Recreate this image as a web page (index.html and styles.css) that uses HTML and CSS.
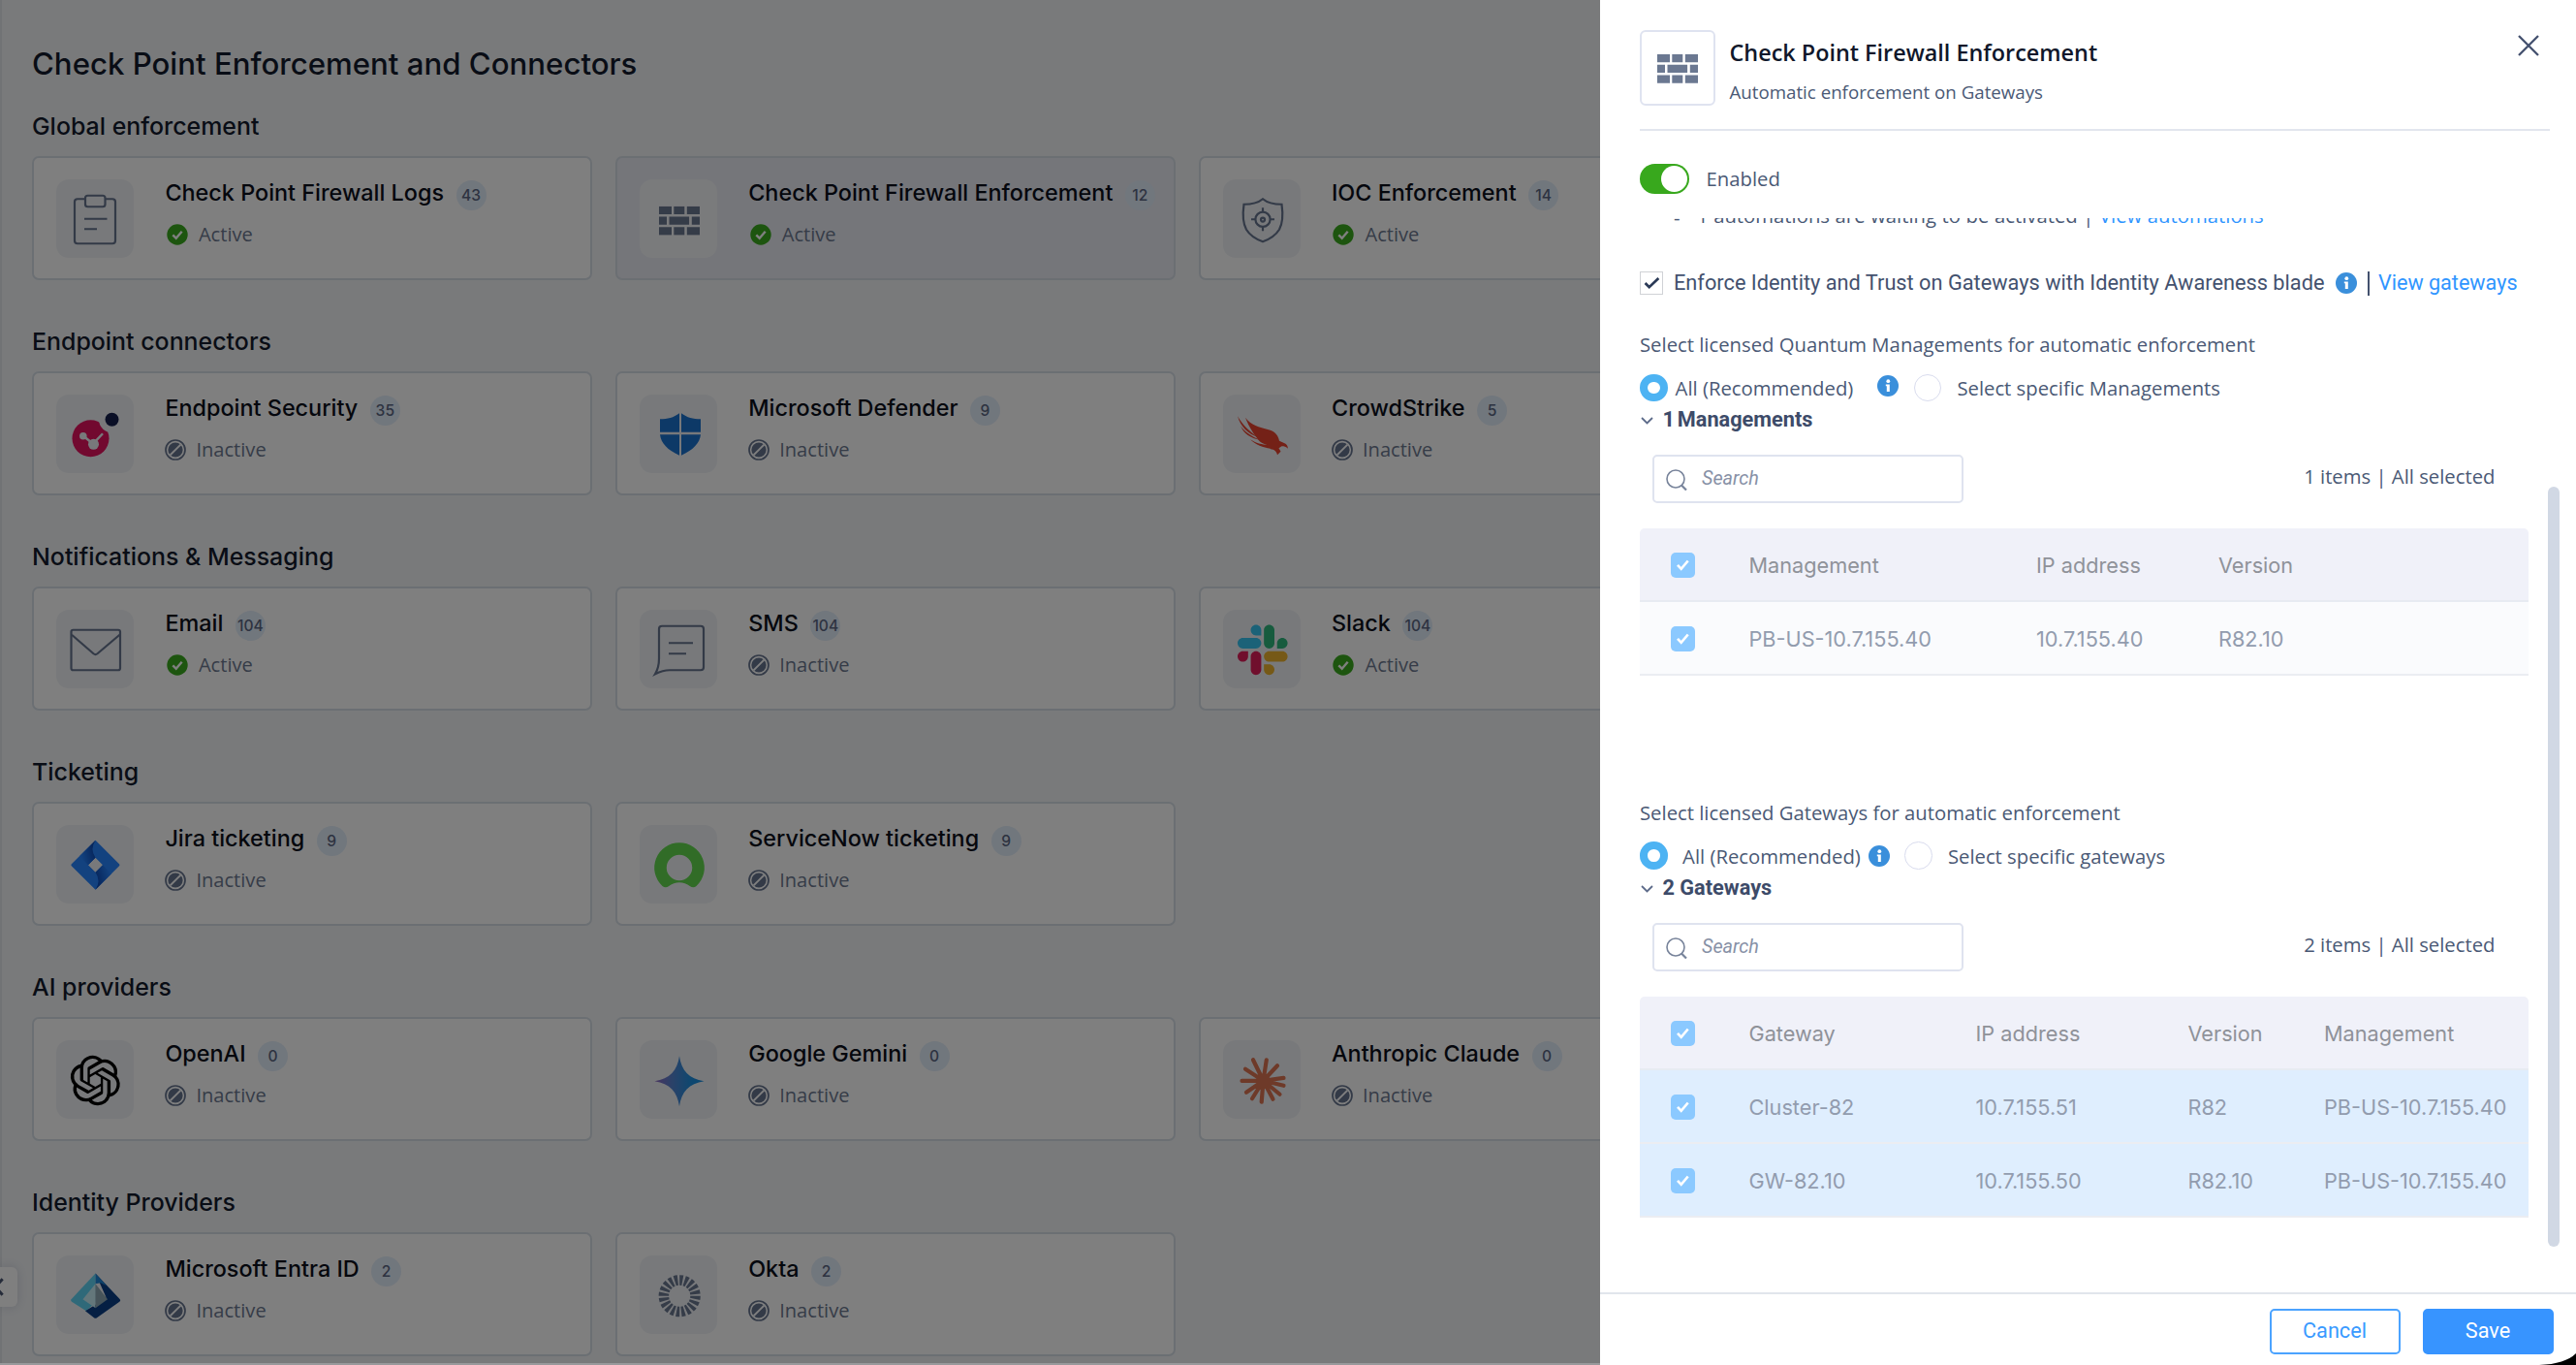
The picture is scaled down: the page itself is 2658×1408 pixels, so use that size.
FILE: index.html
```html
<!DOCTYPE html>
<html lang="en">
<head>
    <meta charset="UTF-8">
    <meta name="viewport" content="width=device-width, initial-scale=1.0">
    <title>Check Point Enforcement and Connectors</title>
    <link rel="stylesheet" href="styles.css">
</head>
<body>
    <!-- Shared icons -->
    <svg class="sprite" xmlns="http://www.w3.org/2000/svg">
        <symbol id="i-active" viewBox="0 0 22 22">
            <circle cx="11" cy="11" r="10.7" fill="#3bab1f"/>
            <path d="M6.3 11.3l3.4 3.4 6-7" fill="none" stroke="#fff" stroke-width="2.4"/>
        </symbol>
        <symbol id="i-inactive" viewBox="0 0 22 22">
            <circle cx="11" cy="11" r="10" fill="none" stroke="#66748f" stroke-width="1.7"/>
            <circle cx="11" cy="11" r="7.6" fill="#66748f"/>
            <path d="M5.6 16.4L16.4 5.6" stroke="#fff" stroke-width="2"/>
        </symbol>
        <symbol id="i-info" viewBox="0 0 22 22">
            <circle cx="11" cy="11" r="11" fill="#3a8fdb"/>
            <circle cx="11.3" cy="6.2" r="1.9" fill="#fff"/>
            <path d="M8.8 9.5h4v7.4h-3v-5.6h-1z" fill="#fff"/>
        </symbol>
        <symbol id="i-bricks" viewBox="0 0 42 30">
            <path d="M0 0h13v8.2H0zM15.3 0h11v8.2h-11zM28.8 0H42v8.2H28.8zM0 10.8h8V19H0zM10.5 10.8h20.6V19H10.5zM33.8 10.8H42V19h-8.2zM0 21.6h13v8.2H0zM15.3 21.6h11v8.2h-11zM28.8 21.6H42v8.2H28.8z" fill="#6b7891"/>
        </symbol>
        <symbol id="i-chevron" viewBox="0 0 13 8">
            <path d="M1 1l5.5 5.5L12 1" fill="none" stroke="#5d6b8a" stroke-width="1.8"/>
        </symbol>
        <symbol id="i-search" viewBox="0 0 22 22">
            <circle cx="10" cy="10" r="9" fill="none" stroke="#77839a" stroke-width="1.6"/>
            <path d="M16 16.500l5 5" stroke="#77839a" stroke-width="2.2"/>
        </symbol>
        <symbol id="i-check" viewBox="0 0 25 25">
            <path d="M7 12.800l3.700 4 7-8.300" fill="none" stroke="#fff" stroke-width="2.7"/>
        </symbol>
    </svg>

    <main class="page">
        <h1>Check Point Enforcement and Connectors</h1>

        <section class="group">
            <h2>Global enforcement</h2>
            <div class="cards">
                <article class="card">
                    <svg class="logo line" viewBox="0 0 80 80">
                        <path d="M30 20h-8a3 3 0 0 0-3 3v40a3 3 0 0 0 3 3h36a3 3 0 0 0 3-3V23a3 3 0 0 0-3-3h-8"/>
                        <rect x="30" y="16.5" width="20.5" height="11.5" rx="2.5"/>
                        <path d="M29 40.500h23.500M29 51h13"/>
                    </svg>
                    <div class="info">
                        <div class="name">Check Point Firewall Logs <span class="count">43</span></div>
                        <div class="status active"><svg><use href="#i-active"/></svg>Active</div>
                    </div>
                </article>
                <article class="card selected">
                    <svg class="logo" viewBox="0 0 80 80"><use href="#i-bricks" x="20" y="27.5" width="42" height="30"/></svg>
                    <div class="info">
                        <div class="name">Check Point Firewall Enforcement <span class="count">12</span></div>
                        <div class="status active"><svg><use href="#i-active"/></svg>Active</div>
                    </div>
                </article>
                <article class="card">
                    <svg class="logo line" viewBox="0 0 80 80">
                        <path d="M41 20c5 4.200 12 5.500 19.500 5.500C62 36 61.500 45 58 51.500 54 58 48 61.500 41 64 34 61.500 28 58 24 51.500 20.500 45 20 36 21.500 25.500 29 25.500 36 24.200 41 20z"/>
                        <circle cx="41" cy="41" r="7.6"/>
                        <path d="M41 29v5M41 48v5M29 41h5M48 41h5"/>
                        <circle cx="41" cy="41.3" r="2"/>
                    </svg>
                    <div class="info">
                        <div class="name">IOC Enforcement <span class="count">14</span></div>
                        <div class="status active"><svg><use href="#i-active"/></svg>Active</div>
                    </div>
                </article>
            </div>
        </section>

        <section class="group">
            <h2>Endpoint connectors</h2>
            <div class="cards">
                <article class="card">
                    <svg class="logo" viewBox="0 0 80 80">
                        <circle cx="35.5" cy="45" r="19" fill="#e4125f"/>
                        <circle cx="57.5" cy="25.5" r="13.5" fill="#f0f3f7"/>
                        <circle cx="57.5" cy="25.5" r="7" fill="#151f4c"/>
                        <path d="M28 42.500l10 8 10-10.500" fill="none" stroke="#f0f3f7" stroke-width="2.5"/>
                        <circle cx="27.8" cy="42.5" r="3.8" fill="#f0f3f7"/>
                        <circle cx="38.5" cy="51" r="5.5" fill="#f0f3f7"/>
                    </svg>
                    <div class="info">
                        <div class="name">Endpoint Security <span class="count">35</span></div>
                        <div class="status"><svg><use href="#i-inactive"/></svg>Inactive</div>
                    </div>
                </article>
                <article class="card">
                    <svg class="logo" viewBox="0 0 80 80">
                        <path d="M41 19v19.500H21V25c8 0 14-1.500 20-6zM43 19c6 4.500 12 6 20 6v13.500H43zM21 41h20v21.500C29 57 22 50 21 41zM43 41h20c-1 9-8 16-20 21.500z" fill="#1b72cf"/>
                    </svg>
                    <div class="info">
                        <div class="name">Microsoft Defender <span class="count">9</span></div>
                        <div class="status"><svg><use href="#i-inactive"/></svg>Inactive</div>
                    </div>
                </article>
                <article class="card">
                    <svg class="logo" viewBox="0 0 80 80">
                        <g fill="#e8432f">
                            <path d="M23 23.500c6 8 14 10 24 12.500 7 2 10 6 11 11.500l5.500 2.500c3 1.500 3 3 3.500 5.500-2-2-4-2.500-6.500-2.500l-3 2 2 3.500-3.500 3.500c-1-4-3-5.500-7-6l-3-4c-5-1.500-8-3-10-6C33 42 27 34 23 23.500z"/>
                            <path d="M15 22c5 9 12 15.500 21 22C26 40 18 33 15 22z"/>
                            <path d="M18 32c4 6 11 10.500 20 14.500C29 45 21 40 18 32z"/>
                            <path d="M28 46c6 4 12 5 19 6l2 3.500C41 54 34 52 28 46z"/>
                        </g>
                    </svg>
                    <div class="info">
                        <div class="name">CrowdStrike <span class="count">5</span></div>
                        <div class="status"><svg><use href="#i-inactive"/></svg>Inactive</div>
                    </div>
                </article>
            </div>
        </section>

        <section class="group">
            <h2>Notifications &amp; Messaging</h2>
            <div class="cards">
                <article class="card">
                    <svg class="logo line" viewBox="0 0 80 80">
                        <rect x="15.5" y="20.5" width="50.5" height="41.5" rx="2"/>
                        <path d="M16 25.500l22.500 19.500q2 1.700 4 0L65.500 25.500"/>
                    </svg>
                    <div class="info">
                        <div class="name">Email <span class="count">104</span></div>
                        <div class="status active"><svg><use href="#i-active"/></svg>Active</div>
                    </div>
                </article>
                <article class="card">
                    <svg class="logo line" viewBox="0 0 80 80">
                        <path d="M23 16.500h40a3 3 0 0 1 3 3V59a3 3 0 0 1-3 3H31c-6 0-11 2-15 4 3-5 4-10 4-16V19.500a3 3 0 0 1 3-3z"/>
                        <path d="M30 34h25M30 45h18"/>
                    </svg>
                    <div class="info">
                        <div class="name">SMS <span class="count">104</span></div>
                        <div class="status"><svg><use href="#i-inactive"/></svg>Inactive</div>
                    </div>
                </article>
                <article class="card">
                    <svg class="logo" viewBox="0 0 80 80">
                        <g transform="translate(15 15.3) scale(.42)">
                            <path d="M25.800 77.600c0 7.100-5.800 12.900-12.900 12.900S0 84.700 0 77.600s5.800-12.900 12.900-12.900h12.900v12.900zm6.500 0c0-7.100 5.800-12.900 12.900-12.900s12.900 5.800 12.900 12.900v32.300c0 7.100-5.800 12.900-12.900 12.900s-12.900-5.800-12.900-12.900V77.600z" fill="#e01e5a"/>
                            <path d="M45.200 25.800c-7.100 0-12.900-5.800-12.900-12.900S38.100 0 45.200 0s12.900 5.800 12.900 12.900v12.900H45.200zm0 6.500c7.100 0 12.900 5.800 12.900 12.900s-5.800 12.900-12.900 12.900H12.900C5.800 58.100 0 52.300 0 45.200s5.800-12.900 12.900-12.900h32.300z" fill="#36c5f0"/>
                            <path d="M97 45.200c0-7.100 5.800-12.900 12.900-12.900s12.900 5.800 12.900 12.900-5.800 12.900-12.900 12.900H97V45.200zm-6.500 0c0 7.100-5.800 12.900-12.900 12.900s-12.900-5.800-12.900-12.900V12.900C64.700 5.800 70.500 0 77.600 0s12.900 5.800 12.900 12.900v32.300z" fill="#2eb67d"/>
                            <path d="M77.600 97c7.100 0 12.900 5.800 12.900 12.900s-5.800 12.900-12.900 12.900-12.900-5.800-12.900-12.900V97h12.900zm0-6.500c-7.100 0-12.900-5.800-12.900-12.900s5.800-12.900 12.900-12.900h32.300c7.100 0 12.900 5.800 12.900 12.900s-5.800 12.900-12.900 12.900H77.600z" fill="#ecb22e"/>
                        </g>
                    </svg>
                    <div class="info">
                        <div class="name">Slack <span class="count">104</span></div>
                        <div class="status active"><svg><use href="#i-active"/></svg>Active</div>
                    </div>
                </article>
            </div>
        </section>

        <section class="group">
            <h2>Ticketing</h2>
            <div class="cards">
                <article class="card">
                    <svg class="logo" viewBox="0 0 80 80">
                        <defs>
                            <linearGradient id="jira1" x1="1" y1="0.3" x2="0.1" y2="0.7"><stop offset="0" stop-color="#0b45ae"/><stop offset="1" stop-color="#2684ff"/></linearGradient>
                            <linearGradient id="jira2" x1="0" y1="0.7" x2="0.9" y2="0.3"><stop offset="0" stop-color="#0b45ae"/><stop offset="1" stop-color="#2684ff"/></linearGradient>
                        </defs>
                        <path d="M40.500 15.500L65 40q1 1 0 2L40.500 66.500 15.800 42q-1-1 0-2zM40.500 33.500L33 41l7.500 7.500L48 41z" fill="#2684ff" fill-rule="evenodd"/>
                        <path d="M40.500 15.500q-6 9 0 18L33 41l-9-9z" fill="url(#jira1)"/>
                        <path d="M40.500 66.500q6-9 0-18L48 41l9 9z" fill="url(#jira2)"/>
                    </svg>
                    <div class="info">
                        <div class="name">Jira ticketing <span class="count">9</span></div>
                        <div class="status"><svg><use href="#i-inactive"/></svg>Inactive</div>
                    </div>
                </article>
                <article class="card">
                    <svg class="logo" viewBox="0 0 80 80">
                        <path d="M41 18a25.800 25.800 0 0 0-17.500 44.800c2 1.700 4.500 1.600 6.300.2 7-5.200 15.400-5.200 22.400 0 1.800 1.400 4.400 1.500 6.300-.2A25.800 25.800 0 0 0 41 18zm0 12.500a13 13 0 1 1 0 26.500 13 13 0 1 1 0-26.500z" fill="#62d84e" fill-rule="evenodd"/>
                    </svg>
                    <div class="info">
                        <div class="name">ServiceNow ticketing <span class="count">9</span></div>
                        <div class="status"><svg><use href="#i-inactive"/></svg>Inactive</div>
                    </div>
                </article>
            </div>
        </section>

        <section class="group">
            <h2>AI providers</h2>
            <div class="cards">
                <article class="card">
                    <svg class="logo" viewBox="0 0 80 80">
                        <path transform="translate(14.5 15.5) scale(2.15)" d="M22.2819 9.8211a5.9847 5.9847 0 0 0-.5157-4.9108 6.0462 6.0462 0 0 0-6.5098-2.9A6.0651 6.0651 0 0 0 4.9807 4.1818a5.9847 5.9847 0 0 0-3.9977 2.9 6.0462 6.0462 0 0 0 .7427 7.0966 5.98 5.98 0 0 0 .511 4.9107 6.051 6.051 0 0 0 6.5146 2.9001A5.9847 5.9847 0 0 0 13.2599 24a6.0557 6.0557 0 0 0 5.7718-4.2058 5.9894 5.9894 0 0 0 3.9977-2.9001 6.0557 6.0557 0 0 0-.7475-7.0729zm-9.022 12.6081a4.4755 4.4755 0 0 1-2.8764-1.0408l.1419-.0804 4.7783-2.7582a.7948.7948 0 0 0 .3927-.6813v-6.7369l2.02 1.1686a.071.071 0 0 1 .038.052v5.5826a4.504 4.504 0 0 1-4.4945 4.4944zm-9.6607-4.1254a4.4708 4.4708 0 0 1-.5346-3.0137l.142.0852 4.783 2.7582a.7712.7712 0 0 0 .7806 0l5.8428-3.3685v2.3324a.0804.0804 0 0 1-.0332.0615L9.74 19.9502a4.4992 4.4992 0 0 1-6.1408-1.6464zM2.3408 7.8956a4.485 4.485 0 0 1 2.3655-1.9728V11.6a.7664.7664 0 0 0 .3879.6765l5.8144 3.3543-2.0201 1.1685a.0757.0757 0 0 1-.071 0l-4.8303-2.7865A4.504 4.504 0 0 1 2.3408 7.872zm16.5963 3.8558L13.1038 8.364 15.1192 7.2a.0757.0757 0 0 1 .071 0l4.8303 2.7913a4.4944 4.4944 0 0 1-.6765 8.1042v-5.6772a.79.79 0 0 0-.407-.667zm2.0107-3.0231l-.142-.0852-4.7735-2.7818a.7759.7759 0 0 0-.7854 0L9.409 9.2297V6.8974a.0662.0662 0 0 1 .0284-.0615l4.8303-2.7866a4.4992 4.4992 0 0 1 6.6802 4.66zM8.3065 12.863l-2.02-1.1638a.0804.0804 0 0 1-.038-.0567V6.0742a4.4992 4.4992 0 0 1 7.3757-3.4537l-.142.0805L8.704 5.459a.7948.7948 0 0 0-.3927.6813zm1.0976-2.3654l2.602-1.4998 2.6069 1.4998v2.9994l-2.5974 1.4997-2.6067-1.4997Z"/>
                    </svg>
                    <div class="info">
                        <div class="name">OpenAI <span class="count">0</span></div>
                        <div class="status"><svg><use href="#i-inactive"/></svg>Inactive</div>
                    </div>
                </article>
                <article class="card">
                    <svg class="logo" viewBox="0 0 80 80">
                        <defs>
                            <linearGradient id="gemini"><stop offset="0" stop-color="#9168c0"/><stop offset=".35" stop-color="#5684d1"/><stop offset=".75" stop-color="#1b8fe0"/></linearGradient>
                        </defs>
                        <path d="M41 16c2 15 10 23.500 25.500 26C51 44.500 43 53 41 68c-2-15-10-23.500-25.500-26C31 39.500 39 31 41 16z" fill="url(#gemini)"/>
                    </svg>
                    <div class="info">
                        <div class="name">Google Gemini <span class="count">0</span></div>
                        <div class="status"><svg><use href="#i-inactive"/></svg>Inactive</div>
                    </div>
                </article>
                <article class="card">
                    <svg class="logo" viewBox="0 0 80 80">
                        <path d="M41.500 41.500L31 20M41.500 41.500L44.800 20M41.500 41.500L56 26M41.500 41.500L62.500 38.700M41.500 41.500L62.500 46.500M41.500 41.500L58.500 55.500M41.500 41.500L51.500 60.500M41.500 41.500L39.700 63.500M41.500 41.500L30 60M41.500 41.500L24 53.500M41.500 41.500L19.500 41.700M41.500 41.500L23 29.500" stroke="#dc7552" stroke-width="4.2" stroke-linecap="round"/>
                        <circle cx="41.5" cy="41.5" r="7" fill="#dc7552"/>
                    </svg>
                    <div class="info">
                        <div class="name">Anthropic Claude <span class="count">0</span></div>
                        <div class="status"><svg><use href="#i-inactive"/></svg>Inactive</div>
                    </div>
                </article>
            </div>
        </section>

        <section class="group">
            <h2>Identity Providers</h2>
            <div class="cards">
                <article class="card">
                    <svg class="logo" viewBox="0 0 80 80">
                        <path d="M40.500 18.300L15.500 45q-1 1.500.5 2.500l15 9.500 9.500-9z" fill="#5fd3f3"/>
                        <path d="M40.500 18.300L65.800 45q1 1.500-.5 2.500L42 64q-1.500 1-3 0l-9-7 10.500-6.500 11-7.500z" fill="#0a3f86"/>
                        <path d="M40.500 18.300L52 31l-6-3-5.500 1z" fill="#1f86d6"/>
                        <path d="M40.500 29L27.500 45l13 9z" fill="#c9eef6"/>
                        <path d="M40.500 29L53 45l-12.500 9z" fill="#8fa9b4"/>
                    </svg>
                    <div class="info">
                        <div class="name">Microsoft Entra ID <span class="count">2</span></div>
                        <div class="status"><svg><use href="#i-inactive"/></svg>Inactive</div>
                    </div>
                </article>
                <article class="card">
                    <svg class="logo" viewBox="0 0 80 80">
                        <circle cx="41.2" cy="41.5" r="16.3" fill="none" stroke="#6b7891" stroke-width="10.5" pathLength="60" stroke-dasharray="1.9 1.1"/>
                    </svg>
                    <div class="info">
                        <div class="name">Okta <span class="count">2</span></div>
                        <div class="status"><svg><use href="#i-inactive"/></svg>Inactive</div>
                    </div>
                </article>
            </div>
        </section>

        <button class="collapse" type="button">
            <svg viewBox="0 0 17 42"><path d="M2.500 12.500L-5 21l7.500 8.500" fill="none" stroke="#4a5672" stroke-width="3"/></svg>
        </button>
    </main>

    <div class="overlay"></div>

    <aside class="panel">
        <header class="panel-header">
            <div class="panel-icon"><svg><use href="#i-bricks"/></svg></div>
            <div class="panel-heading">
                <h3>Check Point Firewall Enforcement</h3>
                <p>Automatic enforcement on Gateways</p>
            </div>
            <svg class="close" viewBox="0 0 22 22"><path d="M1 1l20 20M21 1L1 21" stroke="#43506e" stroke-width="2.3"/></svg>
        </header>

        <div class="enable-row">
            <span class="toggle"></span>
            <span>Enabled</span>
        </div>

        <div class="panel-body">
            <p class="pending"><span class="dash">-</span>1 automations are waiting to be activated | <a>View automations</a></p>

            <div class="enforce">
                <span class="checkbox"><svg viewBox="0 0 24 24"><path d="M5 12l4.500 4.500L20 6.500" fill="none" stroke="#2b3a57" stroke-width="3"/></svg></span>
                <span class="enforce-label">Enforce Identity and Trust on Gateways with Identity Awareness blade</span>
                <svg class="info-icon"><use href="#i-info"/></svg>
                <span class="bar"></span>
                <a>View gateways</a>
            </div>

            <section class="picker managements">
                <p class="picker-title">Select licensed Quantum Managements for automatic enforcement</p>
                <div class="radios">
                    <span class="radio on"></span>
                    <span class="all-label">All (Recommended)</span>
                    <svg class="info-icon"><use href="#i-info"/></svg>
                    <span class="radio"></span>
                    <span class="specific-label">Select specific Managements</span>
                </div>
                <div class="expander"><svg><use href="#i-chevron"/></svg>1 Managements</div>
                <div class="toolbar">
                    <div class="search"><svg><use href="#i-search"/></svg>Search</div>
                    <span class="summary">1 items | All selected</span>
                </div>
                <div class="table">
                    <div class="row head">
                        <span class="check"><svg><use href="#i-check"/></svg></span>
                        <span>Management</span><span>IP address</span><span>Version</span>
                    </div>
                    <div class="row">
                        <span class="check"><svg><use href="#i-check"/></svg></span>
                        <span>PB-US-10.7.155.40</span><span>10.7.155.40</span><span>R82.10</span>
                    </div>
                </div>
            </section>

            <section class="picker gateways">
                <p class="picker-title">Select licensed Gateways for automatic enforcement</p>
                <div class="radios">
                    <span class="radio on"></span>
                    <span class="all-label">All (Recommended)</span>
                    <svg class="info-icon"><use href="#i-info"/></svg>
                    <span class="radio"></span>
                    <span class="specific-label">Select specific gateways</span>
                </div>
                <div class="expander"><svg><use href="#i-chevron"/></svg>2 Gateways</div>
                <div class="toolbar">
                    <div class="search"><svg><use href="#i-search"/></svg>Search</div>
                    <span class="summary">2 items | All selected</span>
                </div>
                <div class="table">
                    <div class="row head">
                        <span class="check"><svg><use href="#i-check"/></svg></span>
                        <span>Gateway</span><span>IP address</span><span>Version</span><span>Management</span>
                    </div>
                    <div class="row">
                        <span class="check"><svg><use href="#i-check"/></svg></span>
                        <span>Cluster-82</span><span>10.7.155.51</span><span>R82</span><span>PB-US-10.7.155.40</span>
                    </div>
                    <div class="row">
                        <span class="check"><svg><use href="#i-check"/></svg></span>
                        <span>GW-82.10</span><span>10.7.155.50</span><span>R82.10</span><span>PB-US-10.7.155.40</span>
                    </div>
                </div>
            </section>

            <div class="scrollbar"></div>
        </div>

        <footer class="panel-footer">
            <button class="btn" type="button">Cancel</button>
            <button class="btn primary" type="button">Save</button>
        </footer>
        <svg class="corner" viewBox="0 0 38 12"><path d="M38 0v12H0Q27 11 38 0z"/></svg>
    </aside>
</body>
</html>
```
FILE: styles.css
```css
* {
    box-sizing: border-box;
}

body {
    margin: 0;
    height: 1408px;
    position: relative;
    overflow: hidden;
    font-family: Inter, sans-serif;
    background: #f3f5f7;
}

h1, h2, h3, p {
    margin: 0;
}

.sprite {
    position: absolute;
    width: 0;
    height: 0;
}

/* Connectors page */
.page {
    height: 1408px;
    padding: 47px 0 0 31px;
    border-left: 2px solid #e3e6ea;
    overflow: hidden;
}

.page h1 {
    margin-bottom: 29.8px;
    font-size: 31.2px;
    line-height: 38px;
    font-weight: 500;
    color: #131a2d;
}

.group {
    height: 222px;
}

.group h2 {
    margin-bottom: 16.4px;
    font-size: 24.91px;
    line-height: 30px;
    font-weight: 500;
    color: #131a2d;
}

.cards {
    display: grid;
    grid-template-columns: repeat(3, 578px);
    gap: 23.8px;
}

.card {
    display: flex;
    gap: 32px;
    height: 127.7px;
    padding: 22.2px 23.4px;
    background: #fff;
    border: 2px solid #d7dee6;
    border-radius: 7px;
}

.card.selected {
    background: #eaecf5;
}

.logo {
    flex: none;
    width: 80px;
    height: 80.5px;
    border-radius: 13px;
    background: #f0f3f7;
}

.selected .logo {
    background: #f5f6f9;
}

.logo.line {
    fill: none;
    stroke: #66748f;
    stroke-width: 2.2;
}

.name {
    display: flex;
    gap: 12.5px;
    height: 28px;
    font-size: 23.4px;
    line-height: 28px;
    font-weight: 500;
    color: #0b0f1b;
    white-space: nowrap;
}

.count {
    width: 31px;
    height: 31px;
    margin-top: 1px;
    border-radius: 50%;
    background: #e3eefa;
    color: #5b6682;
    font-size: 15.6px;
    line-height: 31px;
    display: flex;
    justify-content: center;
}

.status {
    display: flex;
    align-items: center;
    gap: 10px;
    margin-top: 15px;
    font-family: "Open Sans", sans-serif;
    font-size: 20.1px;
    line-height: 28px;
    color: #6d7990;
}

.status svg {
    width: 22px;
    height: 22px;
}

.status.active {
    gap: 11px;
    padding-left: 1.5px;
}

.collapse {
    position: absolute;
    left: 0;
    top: 1307px;
    width: 18px;
    height: 41px;
    padding: 0;
    background: #fff;
    border: 0;
    border-radius: 0 6px 6px 0;
    box-shadow: 0 0 12px rgba(60, 70, 120, 0.2);
}

.collapse svg {
    display: block;
    width: 17px;
    height: 41px;
}

.overlay {
    position: absolute;
    inset: 0;
    background: rgba(0, 0, 0, 0.5);
    border-bottom: 2px solid #98999b;
}

/* Side panel */
.panel {
    position: absolute;
    top: 0;
    right: 0;
    width: 1007.5px;
    height: 1408px;
    display: flex;
    flex-direction: column;
    background: #fff;
    color: #4a5975;
    font-family: "Open Sans", sans-serif;
    font-size: 20.3px;
    line-height: 28px;
}

.panel a {
    color: #2f95ff;
}

.panel-header {
    display: flex;
    align-items: flex-start;
    height: 134.5px;
    margin: 0 27px 0 41.5px;
    padding-top: 31.3px;
    border-bottom: 2px solid #e2e6ee;
}

.panel-icon {
    width: 78px;
    height: 78px;
    margin-right: 14.5px;
    display: flex;
    align-items: center;
    justify-content: center;
    border: 2px solid #dfe3f0;
    border-radius: 6px;
}

.panel-icon svg {
    width: 42px;
    height: 30px;
    margin-top: 2px;
}

.panel-heading h3 {
    margin-top: 6.5px;
    font-size: 23.4px;
    line-height: 32px;
    font-weight: 600;
    color: #10172a;
}

.panel-heading p {
    margin-top: 12px;
    font-size: 18.72px;
    line-height: 26px;
}

.close {
    width: 22px;
    height: 22px;
    margin: 4.7px 11px 0 auto;
}

.enable-row {
    display: flex;
    align-items: center;
    gap: 18px;
    height: 90.5px;
    margin-left: 41.5px;
    padding: 14px 0 5px;
}

.toggle {
    width: 50.5px;
    height: 31px;
    padding: 2px;
    border-radius: 16px;
    background: #38a81d;
}

.toggle::after {
    content: "";
    display: block;
    width: 27px;
    height: 27px;
    margin-left: auto;
    border-radius: 50%;
    background: #fff;
}

.panel-body {
    position: relative;
    height: 1107.5px;
    padding: 0 49px 0 41.5px;
    overflow: hidden;
}

.pending {
    margin-top: -17.2px;
    padding-left: 35px;
    white-space: nowrap;
    word-spacing: 0.3px;
}

.dash {
    display: inline-block;
    width: 24px;
    transform: translateY(1.5px);
}

.enforce {
    display: flex;
    align-items: center;
    height: 28px;
    margin-top: 42.6px;
    font-family: Roboto, sans-serif;
    font-size: 21.75px;
    white-space: nowrap;
    color: #43516e;
}

.enforce a {
    font-size: 21.6px;
}

.checkbox {
    width: 24px;
    height: 24px;
    border: 1.5px solid #d0d2d6;
}

.checkbox svg {
    display: block;
}

.enforce-label {
    margin: 0 12px 0 11px;
}

.info-icon {
    flex: none;
    width: 22px;
    height: 22px;
}

.bar {
    width: 1.5px;
    height: 25px;
    margin: 0 9px 0 11px;
    background: #43516e;
}

.managements {
    margin-top: 34.3px;
}

.gateways {
    margin-top: 126.3px;
}

.radios {
    display: flex;
    align-items: center;
    height: 28.6px;
    margin-top: 16.8px;
    white-space: nowrap;
}

.radio {
    width: 28.6px;
    height: 28.6px;
    border: 1.5px solid #d9dcee;
    border-radius: 50%;
}

.radio.on {
    border: 8px solid #4db3f3;
}

.managements .all-label {
    margin: 0 25px 0 8px;
}

.managements .info-icon {
    margin: 0 15.5px 3px 0;
}

.gateways .all-label {
    margin: 0 8px 0 15.5px;
}

.gateways .info-icon {
    margin-right: 15.5px;
}

.specific-label {
    margin-left: 16px;
}

.expander {
    display: flex;
    align-items: center;
    gap: 9.5px;
    margin-top: 5.3px;
    padding-left: 1px;
    font-family: Roboto, sans-serif;
    font-size: 21.7px;
    font-weight: 700;
    color: #3d4b69;
}

.managements .expander {
    word-spacing: -2.5px;
}

.expander svg {
    width: 13px;
    height: 8px;
    margin-top: 2px;
}

.toolbar {
    display: flex;
    justify-content: space-between;
    align-items: center;
    margin-top: 21.6px;
    padding: 0 34.5px 0 12.5px;
}

.search {
    display: flex;
    align-items: center;
    gap: 15px;
    width: 321.5px;
    height: 49.6px;
    padding: 0 12.5px;
    border: 2px solid #dfe3ef;
    border-radius: 5px;
    font-family: Roboto, sans-serif;
    font-size: 19.8px;
    font-style: italic;
    color: #8791a6;
}

.search svg {
    width: 22px;
    height: 22px;
    margin-top: 3px;
}

.summary {
    margin-bottom: 6px;
}

.table {
    margin-top: 26.8px;
    border-radius: 5px 5px 0 0;
    overflow: hidden;
    font-family: Inter, sans-serif;
    font-size: 21.7px;
    color: #929cae;
}

.row {
    display: grid;
    align-items: center;
    grid-template-columns: 112.5px 296.5px 188px 1fr;
    height: 76px;
    padding-top: 1px;
    background: #fafbfd;
    border-bottom: 2px solid #ebedf2;
    white-space: nowrap;
}

.gateways .row {
    grid-template-columns: 112.5px 234px 219px 140.5px 1fr;
    background: #dfeefe;
}

.row.head,
.gateways .row.head {
    background: #f0f1f9;
    color: #8f9299;
    border-bottom-color: #e7ebf2;
}

.check {
    width: 25px;
    height: 25.5px;
    margin-left: 31.5px;
    border-radius: 5px;
    background: #8bc9ff;
}

.check svg {
    display: block;
    width: 25px;
    height: 25px;
}

.scrollbar {
    position: absolute;
    top: 276.5px;
    right: 17px;
    width: 12.5px;
    height: 784.5px;
    border-radius: 7px;
    background: #d1d8e4;
}

.panel-footer {
    display: flex;
    justify-content: flex-end;
    gap: 23px;
    flex: 1;
    padding: 15.5px 23.5px 0 0;
    border-top: 2px solid #e1e5ec;
}

.btn {
    width: 135px;
    height: 47px;
    padding: 0 0 2px;
    border: 2px solid #4ba3ff;
    border-radius: 5px;
    background: #fff;
    color: #3a9aff;
    font-family: Roboto, sans-serif;
    font-size: 21.7px;
}

.btn.primary {
    border-color: #3794ff;
    background: #3794ff;
    color: #fff;
}

/* Rounded window corner */
.corner {
    position: absolute;
    right: 0;
    bottom: 0;
    width: 38px;
    height: 12px;
}
```
